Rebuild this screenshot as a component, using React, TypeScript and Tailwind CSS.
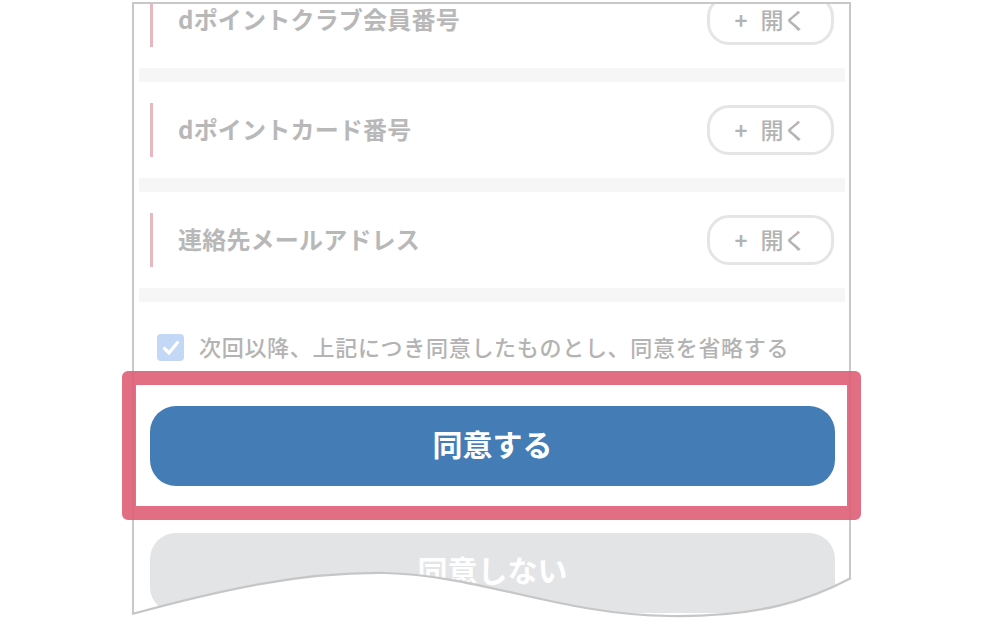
import React from "react";

const font = { fontFamily: '"Noto Sans CJK JP", "Noto Sans", sans-serif' };

function Item({ title }: { title: string }) {
  return (
    <>
      <div className="h-[96px] bg-white flex items-center pl-[11px] pr-[11px]">
        <div className="w-[3px] h-[54px] bg-[#e8b7bf]" />
        <div className="ml-[25px] -mt-[2px] text-[24px] font-bold text-[#b8b8b8] leading-none tracking-[0.2px]">{title}</div>
        <div className="ml-auto w-[127px] h-[50px] rounded-[22px] border-[3px] border-[#e5e5e5] flex items-center justify-center gap-[13px] text-[#b3b3b3]">
          <span className="text-[22px] font-bold leading-none -mt-[2px]">+</span>
          <span className="text-[23px] font-medium leading-none -mt-[2px]">開く</span>
        </div>
      </div>
      <div className="h-[14px] bg-[#f6f6f6]" />
    </>
  );
}

export default function App() {
  return (
    <div className="relative w-[984px] h-[625px] bg-white overflow-hidden" style={font}>
      <div className="ml-[132px] mt-[2px] w-[719px] h-[623px] border-2 border-b-0 border-[#c8c8c8] overflow-hidden">
        <div className="-mt-[32px] pl-[5px] pr-[4px]">
          <Item title="dポイントクラブ会員番号" />
          <Item title="dポイントカード番号" />
          <Item title="連絡先メールアドレス" />
          <div className="pt-[32px] pl-[18px] flex items-center h-[27px] box-content">
            <div className="w-[27px] h-[27px] rounded-[4px] bg-[#c3d8f7] flex items-center justify-center shrink-0">
              <svg width="20" height="20" viewBox="0 0 20 20" fill="none">
                <path d="M3.5 10.5 L8 15 L16.5 4.5" stroke="white" strokeWidth="3.2" strokeLinecap="round" strokeLinejoin="round" />
              </svg>
            </div>
            <div className="ml-[15px] -mt-[4px] text-[22px] font-medium text-[#b3b3b3] leading-none tracking-[0.7px]">
              次回以降、上記につき同意したものとし、同意を省略する
            </div>
          </div>
          <div className="mt-[45px] ml-[11px] mr-[10px] h-[80px] rounded-[26px] bg-[#447db5] flex items-center justify-center">
            <span className="text-[30px] font-bold text-white leading-none -mt-[6px]">同意する</span>
          </div>
          <div className="mt-[47px] ml-[11px] mr-[10px] h-[80px] rounded-[26px] bg-[#e3e4e6] flex items-center justify-center">
            <span className="text-[30px] font-bold text-white leading-none -mt-[8px]">同意しない</span>
          </div>
        </div>
      </div>

      <div className="absolute left-[122px] top-[371px] w-[739px] h-[149px] rounded-[6px] border-[14px] border-[rgba(222,94,116,0.9)]" />

      <svg className="absolute left-0 top-0 pointer-events-none" width="984" height="625" viewBox="0 0 984 625">
        <path
          d="M126,614 L132,614 C220,590 300,572 385,573 C480,575 560,615 670,616 C760,617 810,600 851,578 L858,578 L858,625 L126,625 Z"
          fill="white"
        />
        <path
          d="M132,614 C220,590 300,572 385,573 C480,575 560,615 670,616 C760,617 810,600 851,578"
          fill="none"
          stroke="#c6c6c6"
          strokeWidth="2.2"
        />
      </svg>
    </div>
  );
}
